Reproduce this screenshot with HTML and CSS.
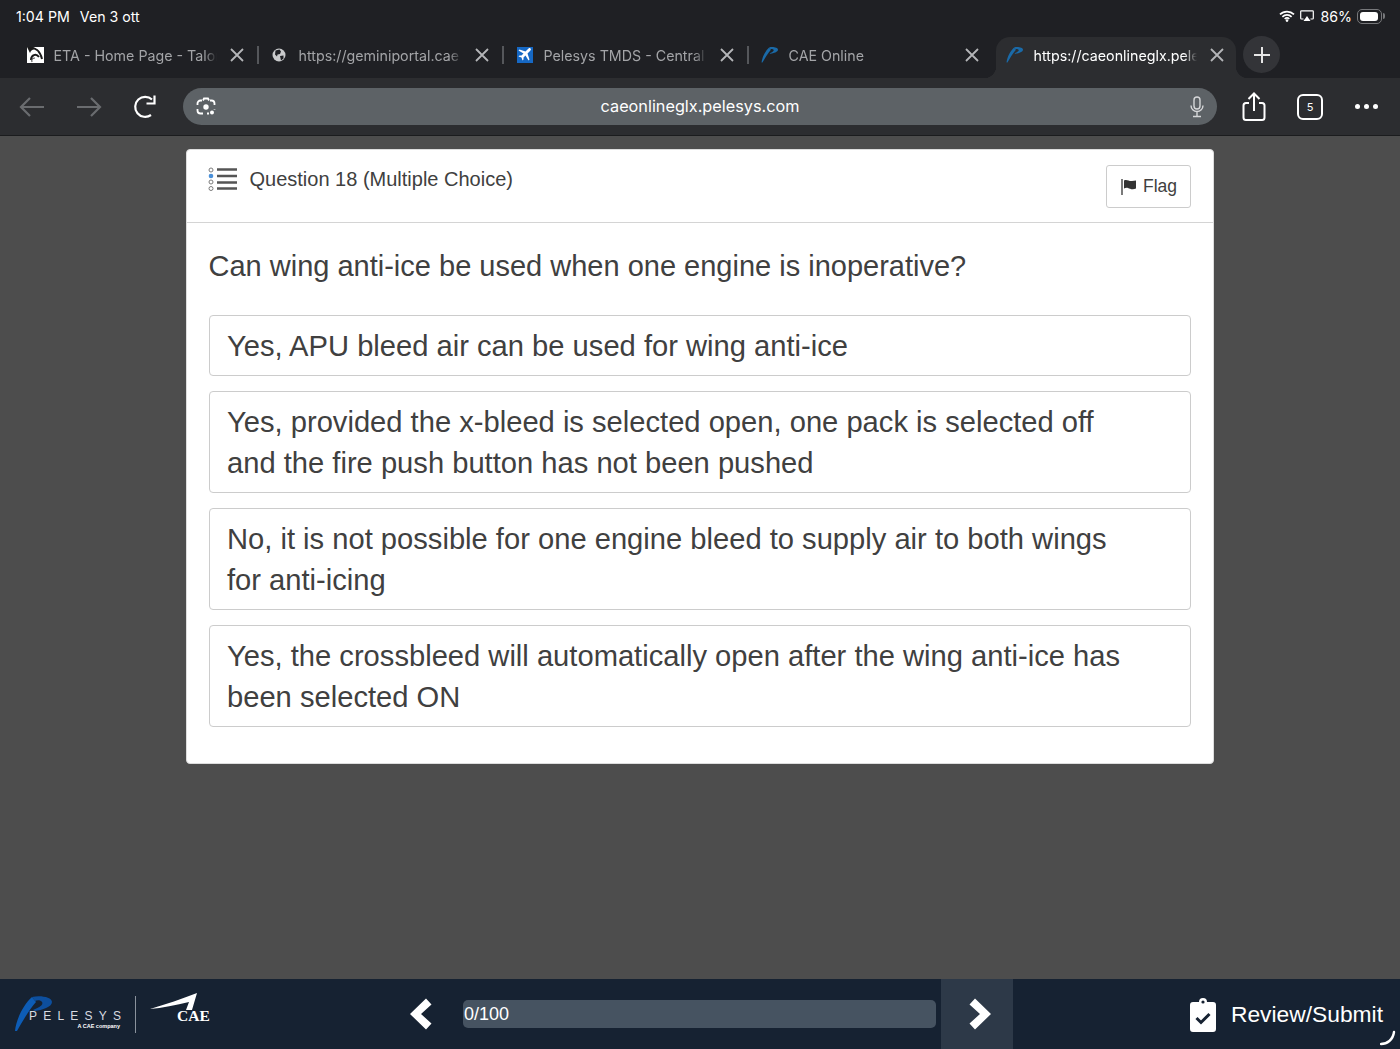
FILE: index.html
```html
<!DOCTYPE html>
<html>
<head>
  <meta charset="utf-8">
  <title>Question 18</title>
  <link rel="stylesheet" href="styles.css">
</head>

<body>
  <div class="browser">
    <div class="status-bar">
      <div class="status-left"><span>1:04 PM</span><span>Ven 3 ott</span></div>
      <div class="status-right">
        <svg width="16" height="12" viewBox="0 0 16 12"><path d="M1 4.400a10 10 0 0 1 14 0M3.400 6.800a6.600 6.600 0 0 1 9.200 0M5.700 9a3.300 3.300 0 0 1 4.600 0" fill="none" stroke="#fff" stroke-width="1.700"/><circle cx="8" cy="10.600" r="1.300" fill="#fff"/></svg>
        <svg width="14" height="12" viewBox="0 0 14 12"><path d="M3.500 9H1.500a.8.8 0 0 1-.8-.8V1.600A.8.8 0 0 1 1.500.8h11a.8.8 0 0 1 .8.800v6.600a.8.8 0 0 1-.8.800h-2" fill="none" stroke="#fff" stroke-width="1.200"/><path d="M7 6l3.500 5h-7z" fill="#fff"/></svg>
        <span>86%</span>
        <div class="battery"><div class="battery-fill"></div></div>
      </div>
    </div>

    <div class="tab-strip">
      <div class="tab">
        <svg class="favicon" width="18" height="18" viewBox="0 0 18 18"><rect x="1" y="1" width="17" height="16" fill="#fff"/><path d="M1 1h6l3 2c-3 0-5 1-6 4z" fill="#1b1b1b"/><path d="M3 2c6-1 11 3 13 11M5 14c0-5 5-7 8-3" fill="none" stroke="#1b1b1b" stroke-width="2"/><path d="M6 16c-1-3 1-4 3-4" fill="none" stroke="#555" stroke-width="1.200"/></svg>
        <span class="tab-title">ETA - Home Page - Talon</span>
        <svg class="tab-x" width="14" height="14" viewBox="0 0 14 14"><path d="M1 1l12 12M13 1L1 13"/></svg>
      </div>
      <div class="tab">
        <svg class="favicon" width="18" height="18" viewBox="0 0 18 18"><circle cx="8" cy="9" r="6.500" fill="#c9cacc"/><path d="M4.500 4.500l4-1 1.500 2-1 2.500-2.500.5-.5 2-2-2zM9 10l3.500-.5 0 3-2.500 2z" fill="#1f2024"/></svg>
        <span class="tab-title">https://geminiportal.cae</span>
        <svg class="tab-x" width="14" height="14" viewBox="0 0 14 14"><path d="M1 1l12 12M13 1L1 13"/></svg>
      </div>
      <div class="tab">
        <svg class="favicon" width="18" height="18" viewBox="0 0 18 18"><rect x="1" y="1" width="16" height="16" fill="#1668c4"/><path d="M14.500 2.500c1 1 0 2-1 3l-2 2 2 6-1 1-3-5-2 2 0 2-1 1-1-3-3-1 1-1 2 0 2-2-5-3 1-1 6 2 2-2c1-1 2-2 3-1z" fill="#fff"/></svg>
        <span class="tab-title">Pelesys TMDS - Central</span>
        <svg class="tab-x" width="14" height="14" viewBox="0 0 14 14"><path d="M1 1l12 12M13 1L1 13"/></svg>
      </div>
      <div class="tab tab-plain">
        <svg class="favicon" width="18" height="16" viewBox="0 0 40 36"><path d="M1 35C2 24 9 9 18 1l4 5C15 14 8 26 3 35z" fill="#1a6aa8"/><path d="M18 1c8-2 20 0 20 5s-10 8-17 9l-2-1c5-2 11-5 9-8-1-2-5-2-7-1z" fill="#1a6aa8"/></svg>
        <span class="tab-title">CAE Online</span>
        <svg class="tab-x" width="14" height="14" viewBox="0 0 14 14"><path d="M1 1l12 12M13 1L1 13"/></svg>
      </div>
      <div class="tab tab-active">
        <svg class="favicon" width="18" height="16" viewBox="0 0 40 36"><path d="M1 35C2 24 9 9 18 1l4 5C15 14 8 26 3 35z" fill="#1a6aa8"/><path d="M18 1c8-2 20 0 20 5s-10 8-17 9l-2-1c5-2 11-5 9-8-1-2-5-2-7-1z" fill="#1a6aa8"/></svg>
        <span class="tab-title">https://caeonlineglx.pele</span>
        <svg class="tab-x" width="14" height="14" viewBox="0 0 14 14"><path d="M1 1l12 12M13 1L1 13"/></svg>
      </div>
      <div class="new-tab">
        <svg width="16" height="16" viewBox="0 0 16 16"><path d="M8 0v16M0 8h16" stroke="#e6e6e6" stroke-width="2"/></svg>
      </div>
    </div>

    <div class="toolbar">
      <svg class="tool-back" width="26" height="20" viewBox="0 0 26 20"><path d="M25 10H2M11 1l-9 9 9 9" fill="none" stroke="#6a6c6f" stroke-width="2.200"/></svg>
      <svg class="tool-forward" width="26" height="20" viewBox="0 0 26 20"><path d="M1 10h23M15 1l9 9-9 9" fill="none" stroke="#6a6c6f" stroke-width="2.200"/></svg>
      <svg class="tool-reload" width="26" height="26" viewBox="0 0 26 26"><path d="M20 21a10 10 0 1 1 1-15.500" fill="none" stroke="#fff" stroke-width="2.200"/><path d="M23.500 1.500v8h-8" fill="none" stroke="#fff" stroke-width="2.200"/></svg>
      <div class="url-bar">
        <svg class="lens" width="20" height="20" viewBox="0 0 20 20"><path d="M7 3.500l1-2h4l1 2M6 3.500H4.500A3 3 0 0 0 1.500 6.500v1.500M14 3.500h1.500a3 3 0 0 1 3 3v1.500M1.500 12v1.500a3 3 0 0 0 3 3H7M18.500 12v.5M13 16.500H11" fill="none" stroke="#fff" stroke-width="1.800"/><circle cx="10" cy="10" r="2.700" fill="#fff"/><circle cx="16" cy="15.500" r="2" fill="#fff"/></svg>
        <span class="url-text">caeonlineglx.pelesys.com</span>
        <svg class="mic" width="14" height="22" viewBox="0 0 14 22"><rect x="4" y="1" width="6" height="12" rx="3" fill="none" stroke="#d5d6d8" stroke-width="1.400"/><path d="M1 9.500a6 6 0 0 0 12 0M7 15.500V20M3 20.500h8" fill="none" stroke="#d5d6d8" stroke-width="1.400"/></svg>
      </div>
      <svg class="tool-share" width="24" height="30" viewBox="0 0 24 30"><path d="M7 11H4a2.500 2.500 0 0 0-2.500 2.500v12A2.500 2.500 0 0 0 4 28h16a2.500 2.500 0 0 0 2.500-2.500v-12A2.500 2.500 0 0 0 20 11h-3M12 19V2M6.500 7L12 1.500 17.500 7" fill="none" stroke="#fff" stroke-width="2"/></svg>
      <div class="tab-count">5</div>
      <div class="more-dots"><i></i><i></i><i></i></div>
    </div>
  </div>

  <div class="page">
    <div class="card">
      <div class="card-head">
        <div class="card-title">
          <svg class="list-icon" width="29" height="25" viewBox="0 0 29 25"><g fill="none" stroke="#7c7c7c"><circle cx="3" cy="3" r="2"/><circle cx="3" cy="15" r="2"/><circle cx="3" cy="21.500" r="2"/></g><circle cx="3" cy="9" r="2.300" fill="#4a90d9"/><path d="M9 2.500h20M9 9h20M9 15.500h20M9 21.500h20" stroke="#555" stroke-width="2.500"/></svg>
          <span>Question 18 (Multiple Choice)</span>
        </div>
        <button class="flag-btn">
          <svg width="16" height="18" viewBox="0 0 16 18"><path d="M1 1v16" stroke="#333" stroke-width="1.300"/><path d="M3 2.500c3-1.500 5 1 8 .5l4-.5v8c-3 1.500-6 .5-8-.5-1.500-.5-3 0-4 .5z" fill="#333"/></svg>
          Flag
        </button>
      </div>
      <div class="card-body">
        <h2 class="question">Can wing anti-ice be used when one engine is inoperative?</h2>
        <div class="answers">
          <div class="answer">Yes, APU bleed air can be used for wing anti-ice</div>
          <div class="answer">Yes, provided the x-bleed is selected open, one pack is selected off and the fire push button has not been pushed</div>
          <div class="answer">No, it is not possible for one engine bleed to supply air to both wings for anti-icing</div>
          <div class="answer">Yes, the crossbleed will automatically open after the wing anti-ice has been selected ON</div>
        </div>
      </div>
    </div>
  </div>

  <div class="footer">
    <div class="logos">
      <div class="pelesys">
        <svg class="pelesys-mark" width="40" height="36" viewBox="0 0 40 36"><path d="M1 35C2 24 9 9 18 1l4 5C15 14 8 26 3 35z" fill="#0d5cb5"/><path d="M18 1c8-2 20 0 20 5s-10 8-17 9l-2-1c5-2 11-5 9-8-1-2-5-2-7-1z" fill="#0d4f9e"/></svg>
        <div class="pelesys-word">PELESYS</div>
        <div class="pelesys-sub">A CAE company</div>
      </div>
      <div class="logo-sep"></div>
      <div class="cae">
        <svg class="cae-mark" width="48" height="20" viewBox="0 0 48 20"><path d="M0 16C16 11 32 6 47 0L42 17h-6l3-8C26 12 12 15 0 16z" fill="#fff"/></svg>
        <div class="cae-word">CAE</div>
      </div>
    </div>
    <div class="pager">
      <button class="nav-btn">
        <svg width="24" height="32" viewBox="0 0 24 32"><path d="M1 16L17 .5l5.500 6L12 16l10.500 9.500-5.500 6z" fill="#fff"/></svg>
      </button>
      <div class="progress">0/100</div>
      <button class="nav-btn nav-next">
        <svg width="24" height="32" viewBox="0 0 24 32"><path d="M23 16L7 .5l-5.500 6L12 16 1.500 25.500l5.500 6z" fill="#fff"/></svg>
      </button>
    </div>
    <div class="review">
      <svg width="26" height="35" viewBox="0 0 26 35"><path d="M3 5h6a4 4 0 0 1 8 0h6a3 3 0 0 1 3 3v24a3 3 0 0 1-3 3H3a3 3 0 0 1-3-3V8a3 3 0 0 1 3-3z" fill="#fff"/><circle cx="13" cy="5" r="1.600" fill="#162232"/><path d="M6.500 21l4.500 4.500 8.500-8.500" fill="none" stroke="#162232" stroke-width="3"/></svg>
      <span>Review/Submit</span>
    </div>
    <svg class="resize-mark" width="16" height="16" viewBox="0 0 16 16"><path d="M1 14c6 0 12-4 13-12" fill="none" stroke="#fff" stroke-width="2.400" stroke-linecap="round"/></svg>
  </div>
</body>
</html>
```

FILE: styles.css
```css
* {
    box-sizing: border-box;
}

html, body {
    margin: 0;
    height: 100%;
}

body {
    width: 1400px;
    height: 1049px;
    display: flex;
    flex-direction: column;
    overflow: hidden;
    font-family: "Liberation Sans", Arial, sans-serif;
    background-color: #4d4d4d;
}

.browser {
    font-family: Inter, "Liberation Sans", sans-serif;
    flex: none;
}

.status-bar {
    height: 36px;
    padding: 0 18px 4px 16px;
    background-color: #1f2024;
    color: #fff;
    font-size: 14.200px;
    display: flex;
    align-items: center;
    justify-content: space-between;
}

.status-left {
    display: flex;
    gap: 10px;
}

.status-right {
    display: flex;
    align-items: center;
    gap: 5px;
}

.status-right span {
    margin-left: 1px;
}

.battery {
    position: relative;
    width: 25px;
    height: 15px;
    padding: 2px;
    border: 1px solid #77787b;
    border-radius: 5px;
}

.battery::after {
    content: "";
    position: absolute;
    right: -4px;
    top: 3px;
    width: 2px;
    height: 6px;
    background-color: #77787b;
    border-radius: 0 2px 2px 0;
}

.battery-fill {
    width: 18px;
    height: 9px;
    background-color: #fff;
    border-radius: 3px;
}

.tab-strip {
    height: 42px;
    padding-left: 13px;
    background-color: #1f2024;
    display: flex;
}

.tab {
    position: relative;
    width: 245px;
    height: 42px;
    padding: 0 0 4px 13px;
    display: flex;
    align-items: center;
    color: #a3a4a7;
    font-size: 14.250px;
}

.tab::after {
    content: "";
    position: absolute;
    right: -1px;
    top: 10px;
    width: 2px;
    height: 18px;
    background-color: #55575b;
}

.tab-plain::after {
    display: none;
}

.favicon {
    flex: none;
}

.tab-title {
    width: 163px;
    margin-left: 9.500px;
    white-space: nowrap;
    overflow: hidden;
    -webkit-mask-image: linear-gradient(to right, #000 92%, transparent);
    mask-image: linear-gradient(to right, #000 92%, transparent);
}

.tab-x {
    flex: none;
    margin-left: 13.500px;
    fill: none;
    stroke: #b4b5b8;
    stroke-width: 1.800;
}

.tab-active {
    width: 240px;
    margin-left: 3px;
    margin-top: 1px;
    height: 41px;
    padding: 0 0 5px 10px;
    color: #fff;
    background-color: #2c2d30;
    border-radius: 14px 14px 0 0;
}

.tab-active::before,
.tab-active::after {
    content: "";
    display: block;
    position: absolute;
    top: auto;
    bottom: 0;
    width: 12px;
    height: 12px;
}

.tab-active::before {
    left: -12px;
    background: radial-gradient(circle at 0 0, transparent 12px, #2c2d30 12.500px);
}

.tab-active::after {
    right: -12px;
    background: radial-gradient(circle at 100% 0, transparent 12px, #2c2d30 12.500px);
}

.new-tab {
    position: relative;
    width: 37px;
    height: 37px;
    margin: 0 0 0 7px;
    border-radius: 50%;
    background-color: #333438;
    display: flex;
    align-items: center;
    justify-content: center;
}

.toolbar {
    height: 58px;
    background-color: #2c2d30;
    border-bottom: 1px solid #1b1c1e;
    display: flex;
    align-items: center;
    padding: 0 20px 0 19px;
}

.tool-forward {
    margin-left: 31px;
}

.tool-reload {
    margin-left: 29px;
}

.url-bar {
    width: 1034px;
    height: 37px;
    margin-left: 26px;
    padding: 0 13px 0 13px;
    border-radius: 19px;
    background-color: #5d6266;
    display: flex;
    align-items: center;
    justify-content: space-between;
}

.url-text {
    margin-bottom: 2px;
    color: #fff;
    font-size: 16.250px;
}

.mic {
    margin-left: 6px;
}

.tool-share {
    margin-left: 25px;
}

.tab-count {
    width: 26px;
    height: 26px;
    margin-left: 31px;
    border: 2px solid #fff;
    border-radius: 6px;
    color: #fff;
    font-size: 11px;
    display: flex;
    align-items: center;
    justify-content: center;
}

.more-dots {
    margin-left: 32px;
    display: flex;
    gap: 4px;
}

.more-dots i {
    width: 5px;
    height: 5px;
    background-color: #fff;
    border-radius: 50%;
}

.page {
    flex: 1;
    display: flex;
    justify-content: center;
    padding-top: 13px;
}

.card {
    width: 1028px;
    height: 615px;
    background-color: #fff;
    border: 1px solid #ddd;
    border-radius: 4px;
    color: #404040;
}

.card-head {
    height: 73px;
    padding: 15px 22px 0 21.500px;
    border-bottom: 1px solid #d4d4d4;
    display: flex;
    justify-content: space-between;
}

.card-title {
    height: 29px;
    display: flex;
    align-items: center;
    gap: 12px;
    font-size: 20px;
}

.list-icon {
    margin-left: -1px;
    margin-right: 1px;
}

.flag-btn {
    width: 85px;
    height: 43px;
    padding: 0 0 0 14px;
    background-color: #fff;
    border: 1px solid #ccc;
    border-radius: 3px;
    color: #404040;
    font-family: "Liberation Sans", Arial, sans-serif;
    font-size: 17.500px;
    display: flex;
    align-items: center;
    gap: 6px;
}

.card-body {
    padding: 22px 22px 0 21.500px;
}

.question {
    margin: 0 0 28px 0;
    font-size: 29px;
    font-weight: normal;
    line-height: 42px;
}

.answers {
    display: flex;
    flex-direction: column;
    gap: 15px;
}

.answer {
    padding: 10px 60px 7px 17.500px;
    border: 1px solid #ccc;
    border-radius: 4px;
    font-size: 29.150px;
    line-height: 41.500px;
}

.footer {
    position: relative;
    flex: none;
    height: 70px;
    background-color: #162232;
    color: #fff;
    display: flex;
    align-items: stretch;
}

.logos {
    width: 396px;
    display: flex;
    align-items: center;
    padding: 0 0 0 14px;
}

.pelesys {
    position: relative;
    width: 110px;
    height: 40px;
}

.pelesys-mark {
    position: absolute;
    left: 0;
    top: 2px;
}

.pelesys-word {
    position: absolute;
    left: 15px;
    top: 15px;
    font-size: 12px;
    letter-spacing: 6.200px;
    color: #d8dbe0;
}

.pelesys-sub {
    position: absolute;
    right: 4px;
    top: 29px;
    font-size: 5.500px;
    font-weight: bold;
    white-space: nowrap;
}

.logo-sep {
    width: 1px;
    height: 37px;
    background-color: #8a929c;
    margin-left: 11px;
}

.cae {
    position: relative;
    width: 70px;
    height: 40px;
    margin-left: 14px;
}

.cae-mark {
    position: absolute;
    left: 0;
    top: -1px;
}

.cae-word {
    position: absolute;
    left: 27px;
    top: 13px;
    font-family: "Liberation Serif", serif;
    font-size: 15.500px;
    font-weight: bold;
}

.pager {
    display: flex;
    align-items: stretch;
}

.nav-btn {
    width: 49px;
    padding: 0;
    border: none;
    background: none;
    display: flex;
    align-items: center;
    justify-content: center;
}

.nav-next {
    width: 72px;
    margin-left: 5px;
    padding-left: 6px;
    background-color: #2d3948;
}

.progress {
    width: 473px;
    height: 28px;
    margin: 21px 0 0 18px;
    padding-left: 1px;
    background-color: #465361;
    border-radius: 5px;
    font-size: 18px;
    line-height: 28px;
}

.review {
    margin-left: auto;
    padding: 0 17px 0 0;
    display: flex;
    align-items: center;
    gap: 15px;
    font-size: 22.800px;
}

.resize-mark {
    position: absolute;
    right: 4px;
    bottom: 3px;
}
```
